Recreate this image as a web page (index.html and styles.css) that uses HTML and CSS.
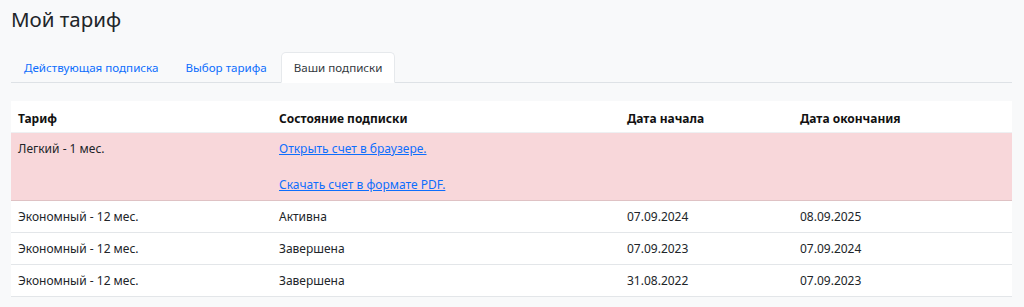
FILE: index.html
```html
<!DOCTYPE html>
<html lang="ru">
<head>
<meta charset="utf-8">
<title>Мой тариф</title>
<link rel="stylesheet" href="styles.css">
</head>
<body>
<div class="page">
  <h1 class="title">Мой тариф</h1>
  <ul class="tabs">
    <li><a class="tab" href="#">Действующая подписка</a></li>
    <li><a class="tab" href="#">Выбор тарифа</a></li>
    <li><a class="tab active" href="#">Ваши подписки</a></li>
  </ul>
  <table class="subs">
    <thead>
      <tr>
        <th class="c1">Тариф</th>
        <th class="c2">Состояние подписки</th>
        <th class="c3">Дата начала</th>
        <th class="c4">Дата окончания</th>
      </tr>
    </thead>
    <tbody>
      <tr class="danger">
        <td>Легкий - 1 мес.</td>
        <td>
          <a class="inv" href="#">Открыть счет в браузере.</a>
          <a class="inv second" href="#">Скачать счет в формате PDF.</a>
        </td>
        <td></td>
        <td></td>
      </tr>
      <tr>
        <td>Экономный - 12 мес.</td>
        <td>Активна</td>
        <td>07.09.2024</td>
        <td>08.09.2025</td>
      </tr>
      <tr>
        <td>Экономный - 12 мес.</td>
        <td>Завершена</td>
        <td>07.09.2023</td>
        <td>07.09.2024</td>
      </tr>
      <tr>
        <td>Экономный - 12 мес.</td>
        <td>Завершена</td>
        <td>31.08.2022</td>
        <td>07.09.2023</td>
      </tr>
    </tbody>
  </table>
</div>
</body>
</html>
```

FILE: styles.css
```css
* { box-sizing: border-box; }
html, body {
  margin: 0;
  padding: 0;
  background: #f8f9fa;
  color: #212529;
  font-family: "Noto Sans", "Open Sans", sans-serif;
  font-size: 12px;
  line-height: 19px;
}
.page {
  padding: 4px 12px 0 11px;
}
.title {
  margin: 0;
  font-size: 20.5px;
  font-weight: 400;
  line-height: 30px;
  height: 48px;
}
.tabs {
  list-style: none;
  margin: 0;
  padding: 0;
  display: flex;
  border-bottom: 1px solid #dee2e6;
  height: 31px;
}
.tabs li { margin-bottom: -1px; }
.tab {
  display: block;
  padding: 5px 12px;
  border: 1px solid transparent;
  border-top-left-radius: 5px;
  border-top-right-radius: 5px;
  color: #0d6efd;
  text-decoration: none;
  font-size: 11.6px;
  height: 31px;
}
.tabs li + li .tab { margin-left: 1px; }
.tab.active {
  color: #343a40;
  background: #fff;
  border-color: #e6e9ec #e6e9ec #fff;
}
.subs {
  margin-top: 18px;
  width: 1001px;
  border-collapse: collapse;
  background: #fff;
  table-layout: fixed;
}
.subs th, .subs td {
  text-align: left;
  vertical-align: top;
  padding: 6px 7px;
  border-bottom: 1px solid #e3e6e9;
}
.subs th {
  font-weight: 700;
  color: #111;
  padding-top: 8px;
  padding-bottom: 4px;
  border-bottom-color: #eef0f2;
}
.c1 { width: 261px; }
.c2 { width: 348px; }
.c3 { width: 173px; }
.c4 { width: 219px; }
.danger td {
  background: #f8d7da;
  border-bottom-color: #dfc2c4;
}
.inv {
  display: block;
  color: #0d6efd;
  text-decoration: underline;
}
.inv.second { margin-top: 17px; }
```
